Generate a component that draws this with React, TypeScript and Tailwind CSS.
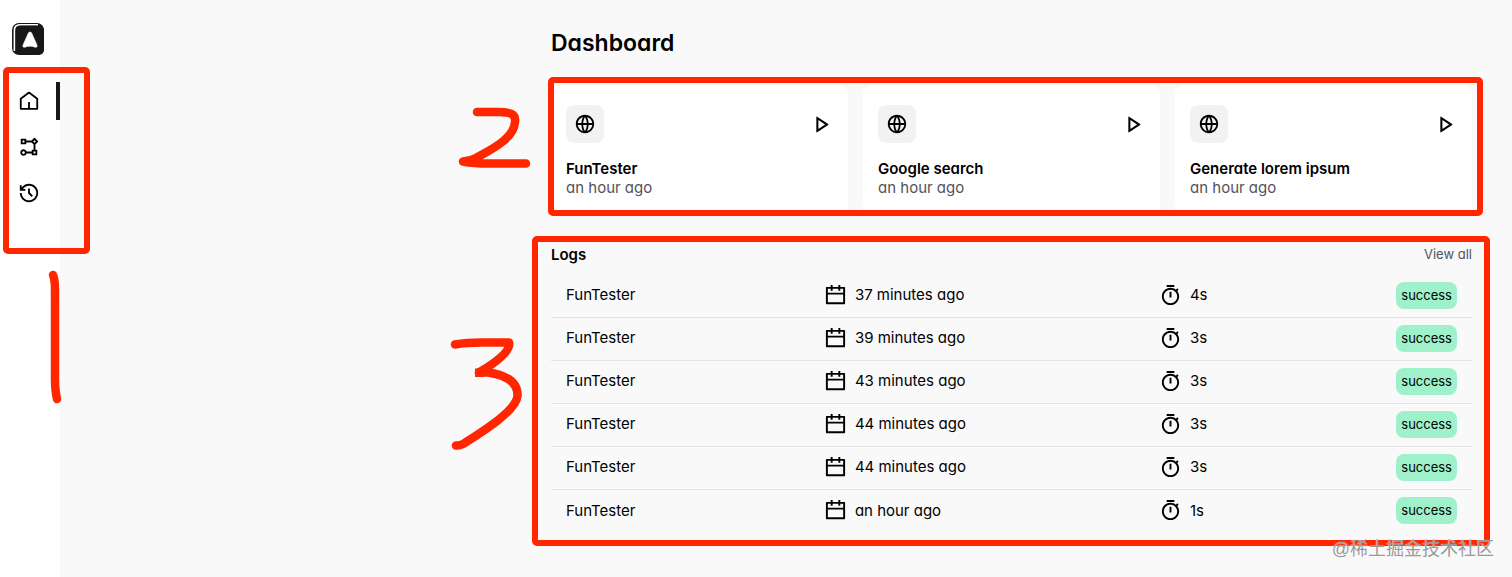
import clsx from "clsx";
import {
  RiCalendarLine,
  RiFlowChart,
  RiGlobalLine,
  RiHistoryLine,
  RiPlayLine,
  RiTimerLine,
} from "react-icons/ri";

function HomeIcon({ className }: { className?: string }) {
  return (
    <svg
      viewBox="0 0 24 24"
      fill="none"
      stroke="currentColor"
      strokeWidth="2"
      strokeLinejoin="round"
      className={className}
      aria-hidden="true"
    >
      <path d="M3 20.500V9.500L12 2.800L21 9.500V20.500H3Z" />
      <path d="M12 13V20.500" />
    </svg>
  );
}

const navItems = [
  { label: "Dashboard", icon: HomeIcon, active: true },
  { label: "Workflows", icon: RiFlowChart, active: false },
  { label: "Logs", icon: RiHistoryLine, active: false },
];

const workflows = [
  { name: "FunTester", time: "an hour ago" },
  { name: "Google search", time: "an hour ago" },
  { name: "Generate lorem ipsum", time: "an hour ago" },
];

const logs = [
  { id: 1, name: "FunTester", startedAt: "37 minutes ago", duration: "4s", status: "success" },
  { id: 2, name: "FunTester", startedAt: "39 minutes ago", duration: "3s", status: "success" },
  { id: 3, name: "FunTester", startedAt: "43 minutes ago", duration: "3s", status: "success" },
  { id: 4, name: "FunTester", startedAt: "44 minutes ago", duration: "3s", status: "success" },
  { id: 5, name: "FunTester", startedAt: "44 minutes ago", duration: "3s", status: "success" },
  { id: 6, name: "FunTester", startedAt: "an hour ago", duration: "1s", status: "success" },
];

function Logo() {
  return (
    <svg viewBox="0 0 34 34" className="size-[34px]" aria-hidden="true">
      <rect x="1" y="1" width="32" height="32" rx="7" fill="#18181b" />
      <path d="M3.400 29V8.500Q3.400 2.900 9 2.900H27" fill="none" stroke="#fff" strokeWidth="1.600" />
      <rect x="4.800" y="3.500" width="28.200" height="29.500" rx="5" fill="#18181b" />
      <path
        d="M19 10c-.9 0-1.400.4-1.800 1.300l-5.200 11.700c-.7 1.800.5 2.700 2 2.200 3.300-1.300 6.700-1.300 10 0 1.500.5 2.700-.4 2-2.200l-5.200-11.700c-.4-.9-.9-1.300-1.800-1.300z"
        fill="#fff"
        stroke="#fff"
        strokeWidth="0.500"
      />
    </svg>
  );
}

function Sidebar() {
  return (
    <aside className="flex w-[60px] shrink-0 flex-col bg-white pt-[22px]">
      <a href="#" aria-label="Home" className="ml-[11px] self-start">
        <Logo />
      </a>
      <nav className="mt-[26px] flex flex-col gap-2">
        {navItems.map(({ label, icon: Icon, active }) => (
          <a
            key={label}
            href="#"
            aria-label={label}
            className={clsx(
              "flex h-[38px] items-center border-r-4 pl-[18px]",
              active ? "border-[#18181b]" : "border-transparent"
            )}
          >
            <Icon className="size-[22px]" />
          </a>
        ))}
      </nav>
    </aside>
  );
}

function WorkflowCard({ name, time }: { name: string; time: string }) {
  return (
    <div className="rounded-lg bg-white px-[15px] pt-[19px] pb-4">
      <div className="mb-4 flex items-center justify-between">
        <span className="rounded-lg bg-[#f2f2f2] p-2">
          <RiGlobalLine className="size-[22px]" />
        </span>
        <button type="button" aria-label={`Run ${name}`}>
          <RiPlayLine className="size-[25px]" />
        </button>
      </div>
      <p className="text-[15px] leading-[19px] font-semibold">{name}</p>
      <p className="text-[15px] leading-[19px] text-[#52525b]">{time}</p>
    </div>
  );
}

function LogsTable() {
  return (
    <table className="mt-2 w-full table-fixed">
      <tbody>
        {logs.map((log) => (
          <tr key={log.id} className="h-[43px] border-b border-[#e4e4e7] last:border-0">
            <td className="w-[28%] pl-[15px]">{log.name}</td>
            <td className="pl-[15px]">
              <div className="flex items-center gap-2">
                <RiCalendarLine className="size-[23px]" />
                {log.startedAt}
              </div>
            </td>
            <td className="w-[18%]">
              <div className="flex items-center gap-2">
                <RiTimerLine className="size-[23px]" />
                {log.duration}
              </div>
            </td>
            <td className="w-[16%] pr-[15px]">
              <div className="flex justify-end">
                <span className="rounded-lg bg-[#9ff1cb] px-[5px] py-1 text-[13px] leading-[19px]">
                  {log.status}
                </span>
              </div>
            </td>
          </tr>
        ))}
      </tbody>
    </table>
  );
}

// Hand drawn markers for the three areas of the page
function Annotations() {
  return (
    <svg
      width="1512"
      height="577"
      viewBox="0 0 1512 577"
      fill="none"
      stroke="#ff2600"
      strokeWidth="6"
      strokeLinejoin="round"
      strokeLinecap="round"
      className="pointer-events-none absolute top-0 left-0"
      aria-hidden="true"
    >
      <rect x="6" y="70" width="81" height="181" rx="2" />
      <rect x="551" y="80" width="929" height="133" rx="2" />
      <rect x="535" y="239" width="952" height="304" rx="2" />
      <g strokeWidth="8.500">
        <path d="M53 275Q55 280 55 290V378Q55 391 57 399" />
        <path d="M477 112H499C512 112 516 115 515 122C514 139 490 150 476 158Q470 161 463 161.500Q474 163.500 488 163.500H526" />
        <path d="M455 344.500Q466 342.500 482 342.500H509Q512 353 479 372.500" />
        <path d="M479 372.500H488C506 375 518 382 517.500 396C516 411 482 432 463 444Q459 446 456 445.500" />
      </g>
      <path d="M475 368.500H484V377H475Z" fill="#ff2600" stroke="none" />
    </svg>
  );
}

export default function App() {
  return (
    <div className="relative flex min-h-screen overflow-hidden bg-[#f9f9f9] font-[Inter,sans-serif] text-[15px] text-black [font-feature-settings:'cv11']">
      <Sidebar />
      <main className="mr-10 ml-auto w-full max-w-[921px] pt-[27px]">
        <h1 className="text-[23px] leading-8 font-semibold">Dashboard</h1>
        <div className="mt-[27px] grid grid-cols-3 gap-[15px]">
          {workflows.map((workflow) => (
            <WorkflowCard key={workflow.name} {...workflow} />
          ))}
        </div>
        <section className="mt-[30px]">
          <div className="flex items-center justify-between leading-[23px]">
            <h2 className="font-semibold">Logs</h2>
            <a href="#" className="text-[13px] leading-[23px] text-[#52525b]">
              View all
            </a>
          </div>
          <LogsTable />
        </section>
      </main>
      <Annotations />
      <span className="absolute right-[18px] bottom-4 font-['Liberation_Sans','Noto_Sans_CJK_SC',sans-serif] text-lg leading-6 text-[#999] [text-shadow:0_0_1px_#fff]">
        @稀土掘金技术社区
      </span>
    </div>
  );
}
